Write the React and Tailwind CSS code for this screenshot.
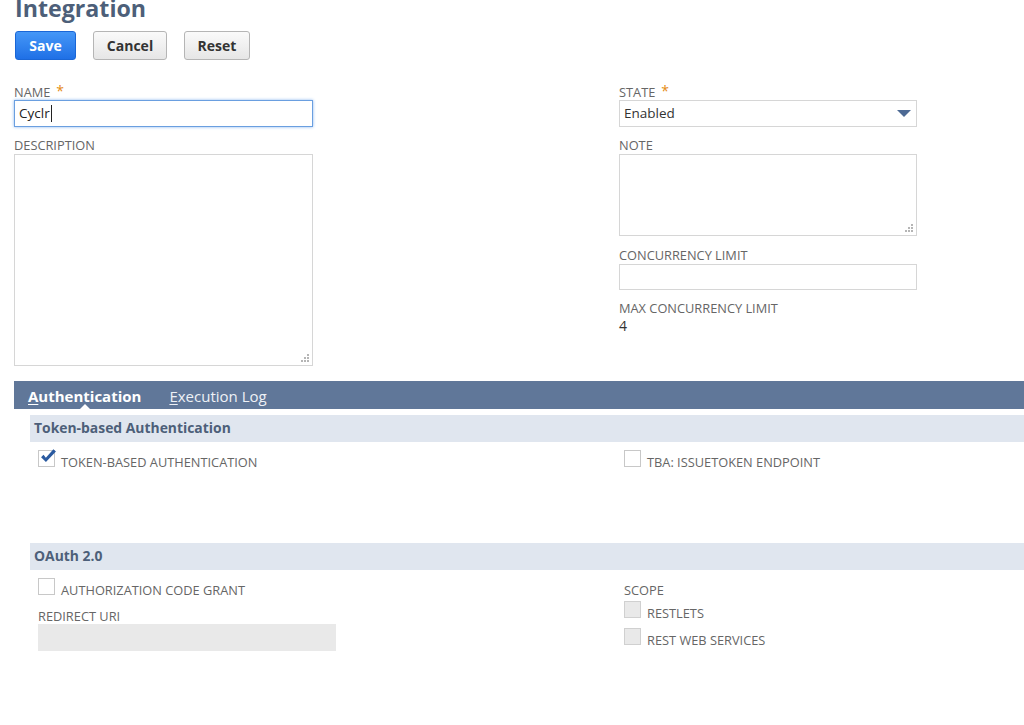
const label = 'text-[12.8px] leading-[15px] uppercase text-[#666]'

function Grip() {
  return (
    <svg className="absolute bottom-[3px] right-[3px]" width="8" height="8" viewBox="0 0 8 8" aria-hidden="true">
      <g fill="#b5b5b5">
        <rect x="6" y="0" width="2" height="2" />
        <rect x="3" y="3" width="2" height="2" />
        <rect x="6" y="3" width="2" height="2" />
        <rect x="0" y="6" width="2" height="2" />
        <rect x="3" y="6" width="2" height="2" />
        <rect x="6" y="6" width="2" height="2" />
      </g>
    </svg>
  )
}

function Required() {
  return <span className="ml-[6px] align-top text-[14px] leading-[12px] text-[#e58a12]">*</span>
}

function Box({ checked, disabled }) {
  return (
    <span className={`relative block h-[17px] w-[17px] shrink-0 border ${disabled ? 'border-[#d0d0d0] bg-[#e9e9e9]' : 'border-[#c8c8c8] bg-white'}`}>
      {checked && (
        <svg className="absolute left-[1px] top-[-3px]" width="17" height="17" viewBox="0 0 16 16" aria-hidden="true">
          <path d="M1 8.6 L5.6 13.2 L15 3.2 L12.6 1.2 L5.5 9.2 L3.3 6.4 Z" fill="#2a5aa0" />
        </svg>
      )}
    </span>
  )
}

function Check({ text, checked, disabled }) {
  return (
    <div className="flex items-end gap-[6px]">
      <Box checked={checked} disabled={disabled} />
      <span className="-mb-[3px] text-[12.8px] leading-[15px] uppercase text-[#666]">{text}</span>
    </div>
  )
}

function SectionHead({ children }) {
  return (
    <div className="ml-[16px] flex h-[27px] items-center bg-[#e0e6ef] pl-[4px] text-[13.9px] font-bold text-[#4d5f79]">
      {children}
    </div>
  )
}

export default function App() {
  return (
    <div className="h-[725px] w-[1024px] overflow-hidden bg-white font-['Open_Sans',sans-serif]">
      <h1 className="-mt-[6px] pl-[15px] text-[23.2px] font-bold leading-[28px] text-[#4d5f79]">Integration</h1>

      <div className="mt-[9px] flex gap-[17px] pl-[15px]">
        <button className="h-[29px] w-[61px] rounded-[3px] border border-[#1a66d6] bg-gradient-to-b from-[#4597f7] to-[#1f70e6] text-[14px] font-bold text-white">Save</button>
        <button className="h-[29px] w-[74px] rounded-[3px] border border-[#b5b5b5] bg-gradient-to-b from-[#fafafa] to-[#e6e6e6] text-[14px] font-bold text-[#333]">Cancel</button>
        <button className="h-[29px] w-[66px] rounded-[3px] border border-[#b5b5b5] bg-gradient-to-b from-[#fafafa] to-[#e6e6e6] text-[14px] font-bold text-[#333]">Reset</button>
      </div>

      <div className="mt-[25px] flex gap-[306px] pl-[14px]">
        <div className="w-[299px]">
          <div className={label}>Name<Required /></div>
          <div className="flex h-[27px] items-center border border-[#6a9fe0] pl-[4px] text-[13.5px] text-[#222] shadow-[0_0_3px_#8cb8f0]">
            Cyclr<span className="ml-[1px] inline-block h-[17px] w-[1px] bg-[#222]" />
          </div>
          <div className={`${label} mt-[11px]`}>Description</div>
          <div className="relative mt-[1px] h-[212px] border border-[#d6d6d6]"><Grip /></div>
        </div>

        <div className="w-[298px]">
          <div className={label}>State<Required /></div>
          <div className="flex h-[27px] items-center justify-between border border-[#d6d6d6] pl-[4px] pr-[5px] text-[13.5px] text-[#333]">
            Enabled
            <svg width="14" height="7" viewBox="0 0 14 7" aria-hidden="true"><path d="M0 0 H14 L7 7 Z" fill="#4d6a94" /></svg>
          </div>
          <div className={`${label} mt-[11px]`}>Note</div>
          <div className="relative mt-[1px] h-[82px] border border-[#d6d6d6]"><Grip /></div>
          <div className={`${label} mt-[12px]`}>Concurrency Limit</div>
          <div className="mt-[1px] h-[26px] border border-[#d6d6d6]" />
          <div className={`${label} mt-[11px]`}>Max Concurrency Limit</div>
          <div className="mt-[2px] text-[14px] leading-[16px] text-[#333]">4</div>
        </div>
      </div>

      <div className="ml-[14px] mt-[15px]">
        <div className="relative flex h-[28px] items-center bg-[#607799] pl-[14px] pt-[3px] text-[15px] text-white">
          <span className="font-bold"><span className="underline underline-offset-2">A</span>uthentication</span>
          <span className="ml-[28px] text-[#eef1f6]"><span className="underline underline-offset-2">E</span>xecution Log</span>
          <span className="absolute bottom-0 left-[66px] h-0 w-0 border-x-[5px] border-b-[5px] border-x-transparent border-b-white" />
        </div>

        <div className="mt-[6px]">
          <SectionHead>Token-based Authentication</SectionHead>
          <div className="flex h-[101px] pl-[24px] pt-[8px]">
            <div className="w-[586px]"><Check text="Token-based Authentication" checked /></div>
            <div><Check text="TBA: IssueToken Endpoint" /></div>
          </div>
        </div>

        <div>
          <SectionHead>OAuth 2.0</SectionHead>
          <div className="flex pl-[24px] pt-[8px]">
            <div className="w-[586px]">
              <Check text="Authorization Code Grant" />
              <div className={`${label} mt-[14px]`}>Redirect URI</div>
              <div className="h-[27px] w-[298px] bg-[#e9e9e9]" />
            </div>
            <div className="pt-[5px]">
              <div className={label}>Scope</div>
              <div className="mt-[3px]"><Check text="Restlets" disabled /></div>
              <div className="mt-[10px]"><Check text="REST Web Services" disabled /></div>
            </div>
          </div>
        </div>
      </div>
    </div>
  )
}
